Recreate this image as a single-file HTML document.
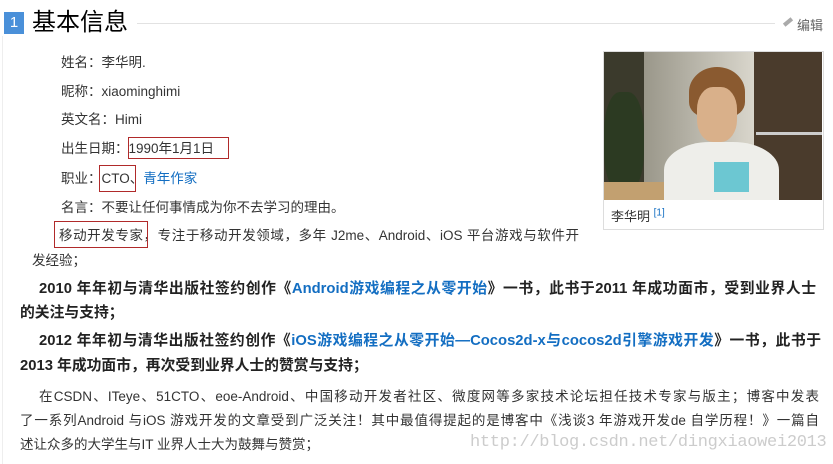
<!DOCTYPE html>
<html><head><meta charset="utf-8"><style>
body{margin:0;width:833px;height:464px;background:#fff;position:relative;overflow:hidden;font-family:"Liberation Sans","Noto Sans CJK SC",sans-serif;color:#333;}
.l{position:absolute;font-size:13.5px;line-height:18px;white-space:nowrap;}
.j{text-align:justify;text-align-last:justify;white-space:normal;}
.b{font-weight:bold;color:#222;font-size:14.8px;}
a{color:#136ec2;text-decoration:none;}
.box{position:absolute;border:1.5px solid #b02a2a;}
</style></head><body>
<div style="position:absolute;left:2px;top:36px;width:1px;height:428px;background:#eee"></div>
<div style="position:absolute;left:4px;top:12px;width:20px;height:22px;background:#4a90d9;color:#fff;font-size:15px;line-height:22px;text-align:center">1</div>
<div style="position:absolute;left:32px;top:7px;font-size:24px;line-height:32px;color:#000">基本信息</div>
<div style="position:absolute;left:137px;top:23px;width:638px;height:1px;background:#e2e2e2"></div>
<div style="position:absolute;left:783px;top:20px;width:10px;height:4px;background:#aaa;transform:rotate(-40deg)"></div>
<div style="position:absolute;left:797px;top:15px;font-size:13px;color:#666">编辑</div>

<div class="l" style="left:61px;top:54px">姓名：李华明.</div>
<div class="l" style="left:61px;top:83px">昵称：xiaominghimi</div>
<div class="l" style="left:61px;top:111px">英文名：Himi</div>
<div class="l" style="left:61px;top:140px">出生日期：1990年1月1日</div>
<div class="box" style="left:128px;top:137px;width:99px;height:20px"></div>
<div class="l" style="left:61px;top:170px">职业：CTO、<a>青年作家</a></div>
<div class="box" style="left:99px;top:165px;width:35px;height:25px"></div>
<div class="l" style="left:61px;top:199px">名言：不要让任何事情成为你不去学习的理由。</div>
<div class="l j" style="left:59px;top:227px;width:520px">移动开发专家，专注于移动开发领域，多年 J2me、Android、iOS 平台游戏与软件开</div>
<div class="box" style="left:54px;top:221px;width:92px;height:25px"></div>
<div class="l" style="left:32px;top:252px">发经验；</div>

<div class="l j b" style="left:39px;top:280px;width:777px">2010 年年初与清华出版社签约创作《<a>Android游戏编程之从零开始</a>》一书，此书于2011 年成功面市，受到业界人士</div>
<div class="l b" style="left:20px;top:304px">的关注与支持；</div>
<div class="l j b" style="left:39px;top:332px;width:782px">2012 年年初与清华出版社签约创作《<a>iOS游戏编程之从零开始—Cocos2d-x与cocos2d引擎游戏开发</a>》一书，此书于</div>
<div class="l b" style="left:20px;top:357px">2013 年成功面市，再次受到业界人士的赞赏与支持；</div>
<div class="l j" style="left:39px;top:388px;width:780px">在CSDN、ITeye、51CTO、eoe-Android、中国移动开发者社区、微度网等多家技术论坛担任技术专家与版主；博客中发表</div>
<div class="l j" style="left:20px;top:412px;width:799px">了一系列Android 与iOS 游戏开发的文章受到广泛关注！其中最值得提起的是博客中《浅谈3 年游戏开发de 自学历程！》一篇自</div>
<div class="l" style="left:20px;top:436px">述让众多的大学生与IT 业界人士大为鼓舞与赞赏；</div>
<div style="position:absolute;left:470px;top:433px;font-family:'Liberation Mono',monospace;font-size:17px;color:#ccc;letter-spacing:-0.3px">http://blog.csdn.net/dingxiaowei2013</div>

<div style="position:absolute;left:603px;top:51px;width:219px;height:177px;border:1px solid #ddd;background:#fff"></div>
<div style="position:absolute;left:604px;top:52px;width:218px;height:148px;overflow:hidden;background:#6e6a5e">
 <div style="position:absolute;left:0;top:0;width:40px;height:148px;background:#3b3a2c"></div>
 <div style="position:absolute;left:40px;top:0;width:110px;height:148px;background:linear-gradient(90deg,#9a978a,#d9d6cc)"></div>
 <div style="position:absolute;left:150px;top:0;width:68px;height:148px;background:#4a3b2c"></div>
 <div style="position:absolute;left:152px;top:80px;width:66px;height:3px;background:#ccc"></div>
 <div style="position:absolute;left:0;top:40px;width:40px;height:100px;background:#2c3a22;border-radius:40%"></div>
 <div style="position:absolute;left:85px;top:15px;width:56px;height:50px;background:#8a5a30;border-radius:50% 50% 30% 30%"></div>
 <div style="position:absolute;left:93px;top:35px;width:40px;height:55px;background:#d9b08a;border-radius:40%"></div>
 <div style="position:absolute;left:60px;top:90px;width:115px;height:70px;background:#eeeeea;border-radius:40% 40% 0 0"></div>
 <div style="position:absolute;left:110px;top:110px;width:35px;height:30px;background:#6cc7d2"></div>
 <div style="position:absolute;left:0;top:130px;width:60px;height:18px;background:#c2a070"></div>
</div>
<div style="position:absolute;left:611px;top:206px;font-size:13px;color:#333">李华明 <sup style="font-size:10px;color:#136ec2">[1]</sup></div>
</body></html>
